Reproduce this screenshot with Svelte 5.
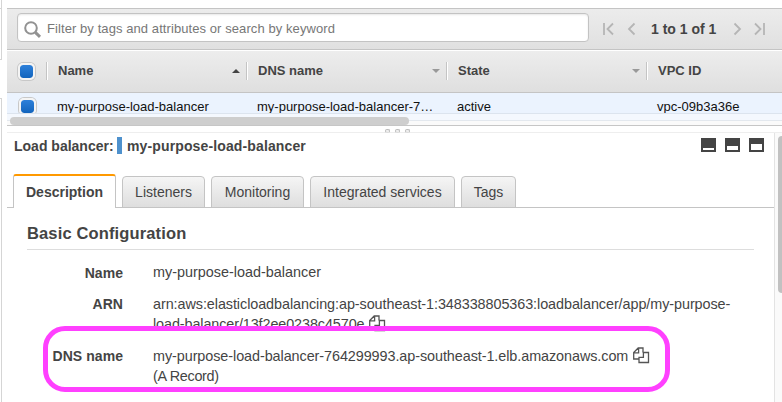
<script>
  const columns = [
    { label: 'Name', sort: 'up', value: 'my-purpose-load-balancer' },
    { label: 'DNS name', sort: 'down', value: 'my-purpose-load-balancer-7…' },
    { label: 'State', sort: 'down', value: 'active' },
    { label: 'VPC ID', sort: '', value: 'vpc-09b3a36e' }
  ];
  const tabs = [
    { label: 'Description', w: 103 },
    { label: 'Listeners', w: 83 },
    { label: 'Monitoring', w: 93 },
    { label: 'Integrated services', w: 145 },
    { label: 'Tags', w: 55 }
  ];
  const panes = [2, 4, 6];
</script>

{#snippet copy()}
  <svg class="copy" width="17" height="17" viewBox="0 0 17 17" fill="none" stroke="#555" stroke-width="1.3">
    <path d="M6 12H.7V5.6L5.2 1H10v4.5M5.6 1v4.8H.7" />
    <path d="M10.4 5.5H15.5V15.5H6V10.3H10.4Z" />
  </svg>
{/snippet}

<div class="screen">
  <div class="gutter"><i class="first"></i><i class="second"></i><i class="third"></i></div>
  <main>
    <div class="filter">
      <div class="search">
        <svg width="18" height="18" viewBox="0 0 18 18" fill="none" stroke="#929292">
          <circle cx="7" cy="7" r="5.8" stroke-width="2" />
          <path d="M11.3 11.3L16 15.8" stroke-width="3" />
        </svg>
        <span>Filter by tags and attributes or search by keyword</span>
      </div>
      <svg class="pg first-page" width="12" height="14" viewBox="0 0 12 14"><path d="M1 1v12M10 1.5L4.5 7L10 12.5" /></svg>
      <svg class="pg prev" width="9" height="14" viewBox="0 0 9 14"><path d="M7.5 1.5L2 7l5.5 5.5" /></svg>
      <b class="range">1 to 1 of 1</b>
      <svg class="pg next" width="9" height="14" viewBox="0 0 9 14"><path d="M1.5 1.5L7 7l-5.5 5.5" /></svg>
      <svg class="pg last" width="12" height="14" viewBox="0 0 12 14"><path d="M10 1v12M1 1.5L6.5 7L1 12.5" /></svg>
    </div>
    <div class="head">
      <div class="check"><i></i></div>
      {#each columns as c}
        <div class="col">
          <b>{c.label}</b>
          {#if c.sort}<i class={c.sort}></i>{/if}
        </div>
      {/each}
    </div>
    <div class="row">
      <div class="check"><i></i></div>
      {#each columns as c}<span class="cell">{c.value}</span>{/each}
    </div>
    <div class="hscroll"><i></i></div>
    <div class="splitter"><i></i><i></i><i></i></div>
    <div class="lower">
      <section>
        <div class="title">
          <b class="lb">Load balancer:</b><i></i><b class="nm">my-purpose-load-balancer</b>
          <div class="panes">
            {#each panes as h}<span><i style="height:{h}px"></i></span>{/each}
          </div>
        </div>
        <div class="tabs">
          {#each tabs as t, i}
            <div class="tab" class:active={i === 0} style="width:{t.w}px"><span>{t.label}</span></div>
          {/each}
        </div>
        <h2><span>Basic Configuration</span></h2>
        <div class="field"><b>Name</b><p>my-purpose-load-balancer</p></div>
        <div class="field arn"><b>ARN</b><p><span class="long">arn:aws:elasticloadbalancing:ap-southeast-1:348338805363:loadbalancer/app/my-purpose-</span><br /><span class="long tail">load-balancer/13f2ee0238c4570e</span> {@render copy()}</p></div>
        <div class="field dns"><b>DNS name</b><p><span class="long">my-purpose-load-balancer-764299993.ap-southeast-1.elb.amazonaws.com</span> {@render copy()}<br /><span class="record">(A Record)</span></p></div>
      </section>
      <div class="vscroll"><i></i></div>
    </div>
  </main>
  <div class="highlight"></div>
</div>

<style>
  :global(body) { background: #fff; }
  .screen { position: relative; display: flex; width: 782px; height: 402px; overflow: hidden; font: 14px "Liberation Sans", Arial, sans-serif; color: #444; background: #fff; }
  .screen * { box-sizing: border-box; }
  i { display: block; }
  svg { flex: none; }
  .gutter { width: 7px; flex: none; display: flex; flex-direction: column; }
  .gutter i { width: 2px; border-right: 1px solid #d5d5d5; }
  .first { height: 9px; border-bottom: 1px solid #d5d5d5; }
  .second { height: 51px; border-bottom: 1px solid #d5d5d5; }
  .third { height: 304px; flex: none; margin-top: 38px; border-top: 1px solid #d5d5d5; }
  main { width: 775px; padding-top: 8px; display: flex; flex-direction: column; white-space: nowrap; }
  .filter { height: 42px; flex: none; border-top: 1px solid #c4c4c4; border-bottom: 1px solid #c4c4c4; background: linear-gradient(#ececec, #e0e0e0); display: flex; align-items: flex-start; padding: 4px 0 0 10px; }
  .search { width: 572px; height: 29px; flex: none; border: 1px solid #c3c3c3; border-radius: 4px; background: #fff; box-shadow: inset 0 1px 2px #e8e8e8; display: flex; padding: 7px 0 0 6px; color: #777; font-size: 13px; }
  .search span { margin: 0 0 0 5px; line-height: 15px; letter-spacing: .08px; }
  .pg { fill: none; stroke: #b5b5b5; stroke-width: 1.8; margin-top: 9px; }
  .first-page { margin-left: 14px; }
  .prev { margin-left: 12px; }
  .range { margin: 7px 0 0 15px; width: 65px; line-height: 18px; }
  .next { margin-left: 17px; }
  .last { margin-left: 12px; }
  .head { height: 43px; flex: none; border-top: 1px solid #fff; border-bottom: 1px solid #c4c4c4; background: linear-gradient(#ededed, #dfdfdf); display: flex; }
  .check { width: 39px; flex: none; padding: 12px 0 0 11px; }
  .check i { width: 17px; height: 17px; border: 2px solid #f4f4f4; border-radius: 5px; background: linear-gradient(#2d80da, #1264bd) padding-box; box-shadow: 0 0 0 1px #c8c8c8; }
  .col { width: 200px; flex: none; display: flex; justify-content: space-between; height: 18px; margin-top: 11px; padding: 0 6px 0 11px; border-left: 1px solid #c4c4c4; box-shadow: inset 1px 0 #fff; font-size: 13px; line-height: 18px; }
  .col i { border: 4px solid transparent; width: 8px; height: 4px; margin-top: 7px; }
  .col i.up { border-top: 0; border-bottom-color: #444; }
  .col i.down { border-bottom: 0; border-top-color: #999; }
  .row { height: 21px; flex: none; background: #ebf3fe; border-bottom: 1px solid #dce4ee; display: flex; overflow: hidden; color: #111; font-size: 13px; }
  .row .check { width: 50px; padding: 5px 0 0 12px; }
  .cell { width: 200px; flex: none; line-height: 16px; padding-top: 6px; }
  .hscroll { height: 12px; flex: none; background: linear-gradient(#f4f8fe 6px, #e3e8ee 6px 7px, #fafafa 7px); border-bottom: 1px solid #c6c6c6; padding: 3px 0 0 3px; }
  .hscroll i { width: 399px; height: 8px; border-radius: 4px; background: #cecece; }
  .splitter { height: 7px; flex: none; border-bottom: 1px solid #eee; display: flex; justify-content: center; gap: 5px; padding: 3px 0 0 5px; }
  .splitter i { width: 5px; height: 4px; border: 1px solid #bbb; border-bottom-color: #ddd; border-radius: 2px; background: #eee; }
  .lower { height: 269px; flex: none; display: flex; }
  section { width: 767px; flex: none; }
  .title { height: 41px; display: flex; padding: 4px 11px 0 7px; line-height: 18px; }
  .title > i { width: 5px; height: 17px; background: #4e91cd; }
  .lb { width: 103px; }
  .nm { margin-left: 5px; letter-spacing: .13px; }
  .panes { display: flex; gap: 9px; margin-left: auto; margin-right: -1px; }
  .panes span { width: 15px; height: 14px; margin-top: 1px; background: #444; display: flex; align-items: flex-end; padding: 2px; }
  .panes span i { width: 11px; background: #fff; }
  .tabs { height: 34px; display: flex; align-items: flex-end; gap: 6px; padding-left: 6px; box-shadow: inset 0 -1px #c4c4c4; }
  .tab { height: 32px; border: 1px solid #c4c4c4; border-radius: 4px 4px 0 0; background: linear-gradient(#f5f5f5, #dedede); display: flex; justify-content: center; line-height: 30px; }
  .tab.active { height: 34px; background: #fff; border-top: 2px solid #f90; border-bottom: 0; border-radius: 3px 3px 0 0; font-weight: bold; line-height: 33px; }
  h2 { margin: 0 20px 0 20px; height: 42px; border-bottom: 1px solid #ddd; font-size: 16.5px; line-height: 51px; letter-spacing: .14px; }
  .field { display: flex; height: 31px; margin-top: 14px; line-height: 20px; font-size: 14.4px; }
  .field.arn { height: 52px; margin-top: 0; }
  .field.dns { margin-top: 0; }
  .field b { width: 116px; flex: none; text-align: right; font-size: 14px; letter-spacing: .06px; margin-top: -1px; }
  p { margin: -2px 0 0 30px; }
  .arn p, .dns p { margin-top: -1px; }
  .long { letter-spacing: -.07px; }
  .long.tail { letter-spacing: -.1px; }
  .record { letter-spacing: -.3px; }
  .copy { vertical-align: -3px; margin-left: 1px; }
  .vscroll { width: 8px; border-left: 1px solid #e3e3e3; background: #fafafa; padding: 3px 0 0 3px; overflow: hidden; }
  .vscroll i { width: 8px; height: 157px; border-radius: 4px; background: #c1c1c1; }
  .highlight { position: absolute; left: 43px; top: 326px; width: 627px; height: 66px; border: 5px solid #ff40ff; border-radius: 22px; }
</style>
